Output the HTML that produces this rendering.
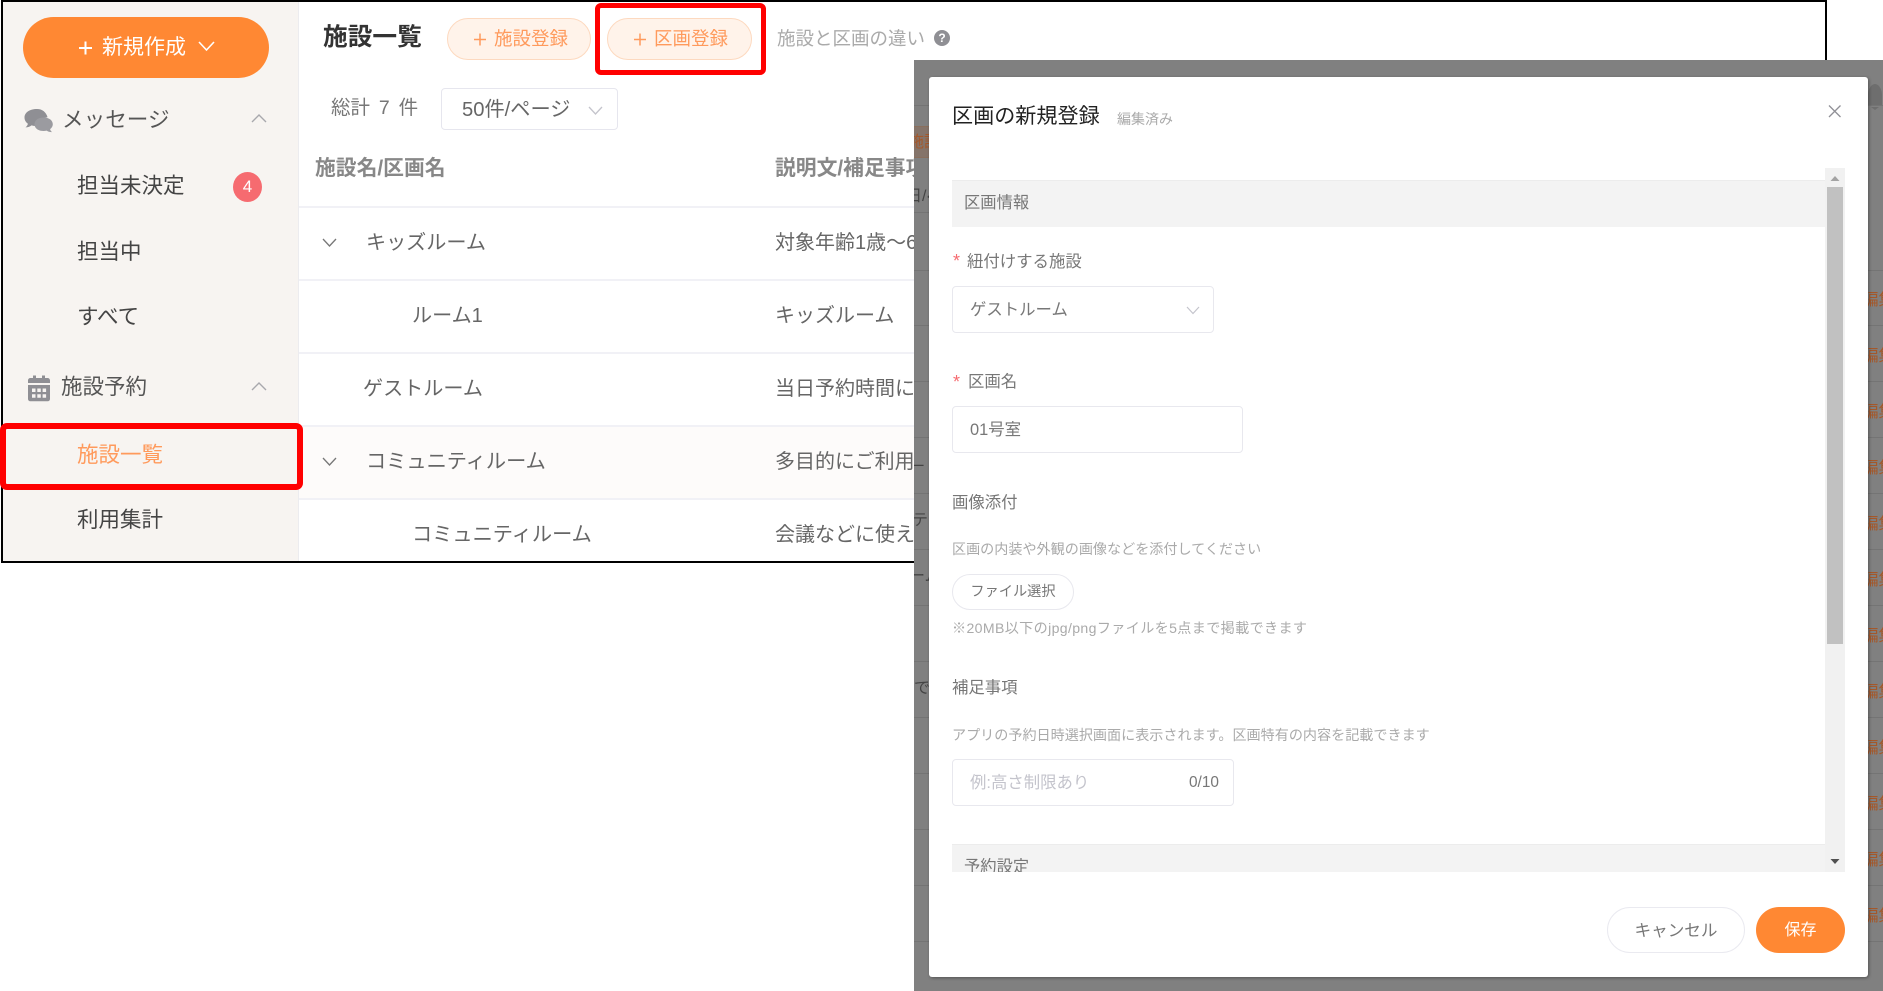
<!DOCTYPE html>
<html lang="ja"><head><meta charset="utf-8"><title>区画の新規登録</title>
<style>
html,body{margin:0;padding:0;background:#fff;width:1883px;height:991px;overflow:hidden}
body{position:relative;font-family:"Liberation Sans","Noto Sans CJK JP",sans-serif;color:#555}
.a{position:absolute;box-sizing:border-box}
.t{position:absolute;line-height:30px;height:30px;white-space:nowrap;margin-top:1px}
.c{text-align:center}
svg{position:absolute;overflow:visible}
.line{position:absolute;background:#f1f1f6;height:2px;left:299px;width:615px}
</style></head><body>

<!-- outer frame -->
<div class="a" style="left:1px;top:0;width:1826px;height:563px;border:2px solid #000"></div>

<!-- sidebar -->
<div class="a" style="left:3px;top:2px;width:296px;height:559px;background:#f7f4f1;border-right:1px solid #ececef"></div>
<div class="a" style="left:23px;top:17px;width:246px;height:61px;border-radius:31px;background:#ff8833"></div>
<svg style="left:0;top:0" width="300" height="560" fill="none">
<path d="M79 48H92M85.500 41.500V54.500" stroke="#fff" stroke-width="2"/>
<path d="M199 42l7.500 8 7.500-8" stroke="#fff" stroke-width="1.600"/>
<path d="M252 122l7-7 7 7M252 390l7-7 7 7" stroke="#a8a8ad" stroke-width="1.400"/>
<path d="M37 109c-7.500 0-12.500 3.600-12.500 8.500 0 2.600 1.300 4.700 3.400 6.200-.3 1.500-1.200 2.700-2.400 3.700 2.400 0 4.400-.8 6-2 1.700.5 3.500.7 5.500.6 0-4.800 4.300-8.300 10.600-8.800C46 112 42.300 109 37 109z" fill="#8f8f94"/>
<path d="M43.500 117.500c-5.300 0-9 2.900-9 6.800s3.700 6.700 9 6.700c1.100 0 2.200-.1 3.200-.4 1.200.9 2.900 1.500 5.300 1.500-1-.9-1.700-1.900-1.900-3 1.700-1.200 2.700-2.900 2.700-4.800 0-3.900-3.700-6.800-9.300-6.800z" fill="#9b9ba0"/>
<path d="M28 380.500c0-1.400 1-2.500 2.400-2.500H33v-2.500h3V378h6v-2.500h3V378h2.600c1.400 0 2.400 1.100 2.400 2.500V383H28z" fill="#8f8f94"/>
<path d="M28 385h22v14c0 1.300-1 2.300-2.300 2.300H30.300c-1.300 0-2.300-1-2.300-2.300z" fill="#8f8f94"/>
<path d="M32 388.500h3.500v3.500H32zM37.300 388.500h3.500v3.500h-3.500zM42.600 388.500h3.500v3.500h-3.500zM32 394.300h3.500v3.500H32zM37.300 394.300h3.500v3.500h-3.500zM42.600 394.300h3.500v3.500h-3.500z" fill="#f7f4f1"/>
</svg>
<div class="t" style="left:102px;top:32px;font-size:21px;color:#fff">新規作成</div>
<div class="t" style="left:62px;top:104px;font-size:21.600px;color:#555">メッセージ</div>
<div class="t" style="left:77px;top:170px;font-size:21.500px;color:#444">担当未決定</div>
<div class="a" style="left:233px;top:172px;width:29px;height:30px;border-radius:50%;background:#f66b70"></div>
<div class="t c" style="left:233px;top:171px;width:29px;font-size:17px;color:#fff">4</div>
<div class="t" style="left:77px;top:236px;font-size:21.500px;color:#444">担当中</div>
<div class="t" style="left:77px;top:301px;font-size:21.500px;color:#444">すべて</div>
<div class="t" style="left:61px;top:371px;font-size:21.500px;color:#555">施設予約</div>
<div class="t" style="left:77px;top:439px;font-size:21.500px;color:#ff9a5c">施設一覧</div>
<div class="t" style="left:77px;top:504px;font-size:21.500px;color:#444">利用集計</div>

<!-- main header -->
<div class="t" style="left:323px;top:22px;font-size:24.700px;font-weight:700;color:#333">施設一覧</div>
<div class="a" style="left:447px;top:18px;width:144px;height:42px;border-radius:21px;background:#fff3ea;border:1.500px solid #fdd9bf"></div>
<div class="a" style="left:607px;top:18px;width:145px;height:42px;border-radius:21px;background:#fff3ea;border:1.500px solid #fdd9bf"></div>
<svg style="left:0;top:0" width="800" height="100" fill="none"><path d="M474 39.500h12M480 33.500v12M634 39.500h12M640 33.500v12" stroke="#ff9a5c" stroke-width="1.500"/></svg>
<div class="t" style="left:494px;top:23px;font-size:18.500px;color:#ff9a5c">施設登録</div>
<div class="t" style="left:654px;top:23px;font-size:18.500px;color:#ff9a5c">区画登録</div>
<div class="t" style="left:777px;top:23px;font-size:18.500px;color:#aaa">施設と区画の違い</div>
<div class="a" style="left:934px;top:30px;width:16px;height:16px;border-radius:50%;background:#8f8f94"></div>
<div class="t c" style="left:934px;top:22px;width:16px;font-size:12px;font-weight:700;color:#fff">?</div>

<div class="t" style="left:331px;top:92px;font-size:19.500px;color:#777;word-spacing:3.500px">総計 7 件</div>
<div class="a" style="left:441px;top:88px;width:177px;height:42px;border:1.500px solid #e6e6ee;border-radius:4px"></div>
<div class="t" style="left:462px;top:94px;font-size:20.200px;color:#666">50件/ページ</div>
<svg style="left:0;top:0" width="700" height="150" fill="none"><path d="M589 107l6.500 7 6.500-7" stroke="#c4c4cc" stroke-width="1.300"/></svg>

<!-- table -->
<div class="t" style="left:315px;top:153px;font-size:20.800px;font-weight:700;color:#888">施設名/区画名</div>
<div class="a" style="left:775px;top:150px;width:139px;height:40px;overflow:hidden"><div class="t" style="left:0;top:3px;font-size:20.800px;font-weight:700;color:#888">説明文/補足事項</div></div>
<div class="line" style="top:206px"></div>
<div class="line" style="top:279px"></div>
<div class="line" style="top:352px"></div>
<div class="a" style="left:299px;top:426px;width:615px;height:72px;background:#fdfbfa"></div>
<div class="line" style="top:425px"></div>
<div class="line" style="top:498px"></div>
<svg style="left:0;top:0" width="400" height="500" fill="none"><path d="M323 239l6.500 7 6.500-7M323 458l6.500 7 6.500-7" stroke="#777" stroke-width="1.300"/></svg>
<div class="t" style="left:366px;top:227px;font-size:20.100px;color:#666">キッズルーム</div>
<div class="t" style="left:412px;top:300px;font-size:20.100px;color:#666">ルーム1</div>
<div class="t" style="left:363px;top:373px;font-size:20.100px;color:#666">ゲストルーム</div>
<div class="t" style="left:366px;top:446px;font-size:20.200px;color:#666">コミュニティルーム</div>
<div class="t" style="left:412px;top:519px;font-size:20.200px;color:#666">コミュニティルーム</div>
<div class="a" style="left:775px;top:220px;width:139px;height:330px;overflow:hidden">
<div class="t" style="left:0;top:7px;font-size:20px;color:#666">対象年齢1歳～6歳</div>
<div class="t" style="left:0;top:80px;font-size:20px;color:#666">キッズルーム</div>
<div class="t" style="left:0;top:153px;font-size:20px;color:#666">当日予約時間に</div>
<div class="t" style="left:0;top:226px;font-size:20px;color:#666">多目的にご利用</div>
<div class="t" style="left:0;top:299px;font-size:20px;color:#666">会議などに使え</div>
</div>

<!-- red highlights -->
<div class="a" style="left:0;top:423px;width:303px;height:67px;border:6px solid #f00;border-radius:7px"></div>
<div class="a" style="left:595px;top:3px;width:171px;height:72px;border:5px solid #f00;border-radius:6px"></div>

<!-- overlay -->
<div class="a" style="left:914px;top:60px;width:969px;height:931px;background:#808080;overflow:hidden">
  <svg style="left:0;top:0" width="969" height="931" fill="none" stroke="#747474" stroke-width="1">
  <path d="M0 45.500H969M0 152.500H15M0 210.500H969M0 265.500H969M0 321.500H969M0 377.500H969M0 433.500H969M0 489.500H969M0 545.500H969M0 601.500H969M0 657.500H969M0 713.500H969M0 769.500H969M0 825.500H969M0 881.500H969"/>
  <path d="M954 35c0-7 4-11 7-11s7 4 7 11v10h-14z" fill="#6e6e6e" stroke="none"/>
  <path d="M957 47h8l-4 3z" fill="#6e6e6e" stroke="none"/>
  </svg>
  <div class="a" style="left:0;top:66px;width:15px;height:32px;background:#85746a;border-top:1px solid #8a6f5d;border-bottom:1px solid #8a6f5d"></div>
  <div class="a" style="left:0;top:0;width:15px;height:931px;overflow:hidden">
    <div class="t" style="left:-6px;top:67px;font-size:16px;color:#a5582a">施設</div>
    <div class="t" style="left:-8px;top:121px;font-size:16px;color:#444">日/ペ</div>
    <div class="t" style="left:-3px;top:390px;font-size:14px;color:#444">ー</div>
    <div class="t" style="left:-2px;top:445px;font-size:16px;color:#444">ティ</div>
    <div class="t" style="left:-5px;top:501px;font-size:16px;color:#444">ーム</div>
    <div class="t" style="left:0;top:613px;font-size:16px;color:#444">で</div>
  </div>
  <div class="a" style="left:954px;top:0;width:15px;height:931px;overflow:hidden">
    <div class="t" style="left:-6px;top:224px;font-size:16.500px;color:#a5582a">編集</div>
    <div class="t" style="left:-6px;top:280px;font-size:16.500px;color:#a5582a">編集</div>
    <div class="t" style="left:-6px;top:336px;font-size:16.500px;color:#a5582a">編集</div>
    <div class="t" style="left:-6px;top:392px;font-size:16.500px;color:#a5582a">編集</div>
    <div class="t" style="left:-6px;top:448px;font-size:16.500px;color:#a5582a">編集</div>
    <div class="t" style="left:-6px;top:504px;font-size:16.500px;color:#a5582a">編集</div>
    <div class="t" style="left:-6px;top:560px;font-size:16.500px;color:#a5582a">編集</div>
    <div class="t" style="left:-6px;top:616px;font-size:16.500px;color:#a5582a">編集</div>
    <div class="t" style="left:-6px;top:672px;font-size:16.500px;color:#a5582a">編集</div>
    <div class="t" style="left:-6px;top:728px;font-size:16.500px;color:#a5582a">編集</div>
    <div class="t" style="left:-6px;top:784px;font-size:16.500px;color:#a5582a">編集</div>
    <div class="t" style="left:-6px;top:840px;font-size:16.500px;color:#a5582a">編集</div>
  </div>
</div>

<!-- modal -->
<div class="a" style="left:929px;top:77px;width:939px;height:900px;background:#fff;border-radius:3px;box-shadow:1px 1px 3px rgba(0,0,0,.35)"></div>
<div class="t" style="left:952px;top:101px;font-size:21.100px;color:#222">区画の新規登録</div>
<div class="t" style="left:1117px;top:103px;font-size:14px;color:#aaa">編集済み</div>
<svg style="left:0;top:0" width="1883" height="991" fill="none"><path d="M1829 105.500l11.500 11.500M1840.500 105.500l-11.500 11.500" stroke="#909096" stroke-width="1.300"/></svg>

<!-- scroll content -->
<div class="a" style="left:952px;top:168px;width:873px;height:704px;overflow:hidden;background:#fff">
  <div class="a" style="left:0;top:12px;width:873px;height:47px;background:#f3f3f3;border-top:1px solid #ececec"></div>
  <div class="t" style="left:12px;top:19px;font-size:16.300px;color:#777">区画情報</div>
  <div class="a" style="left:0;top:676px;width:873px;height:47px;background:#f3f3f3;border-top:1px solid #ececec"></div>
  <div class="t" style="left:12px;top:683px;font-size:16.300px;color:#777">予約設定</div>
</div>

<div class="t" style="left:953px;top:245px;font-size:18px;color:#f66b70">*</div>
<div class="t" style="left:967px;top:246px;font-size:16.400px;color:#777">紐付けする施設</div>
<div class="a" style="left:952px;top:286px;width:262px;height:47px;border:1.500px solid #e8e8ee;border-radius:4px"></div>
<div class="t" style="left:970px;top:294px;font-size:16.400px;color:#777">ゲストルーム</div>
<svg style="left:0;top:0" width="1300" height="400" fill="none"><path d="M1187 307l6 6.500 6-6.500" stroke="#c4c4cc" stroke-width="1.200"/></svg>

<div class="t" style="left:953px;top:366px;font-size:18px;color:#f66b70">*</div>
<div class="t" style="left:968px;top:366px;font-size:16.400px;color:#777">区画名</div>
<div class="a" style="left:952px;top:406px;width:291px;height:47px;border:1.500px solid #e8e8ee;border-radius:4px"></div>
<div class="t" style="left:970px;top:414px;font-size:16.400px;color:#777">01号室</div>

<div class="t" style="left:952px;top:487px;font-size:16.400px;color:#777">画像添付</div>
<div class="t" style="left:952px;top:533px;font-size:14.100px;color:#aaa">区画の内装や外観の画像などを添付してください</div>
<div class="a" style="left:952px;top:574px;width:122px;height:36px;border:1.500px solid #e8e8ee;border-radius:18px"></div>
<div class="t c" style="left:952px;top:576px;width:122px;font-size:14.200px;color:#777">ファイル選択</div>
<div class="t" style="left:952px;top:612px;font-size:14.100px;color:#aaa;letter-spacing:.36px">※20MB以下のjpg/pngファイルを5点まで掲載できます</div>

<div class="t" style="left:952px;top:672px;font-size:16.400px;color:#777">補足事項</div>
<div class="t" style="left:952px;top:719px;font-size:14.100px;color:#aaa">アプリの予約日時選択画面に表示されます。区画特有の内容を記載できます</div>
<div class="a" style="left:952px;top:759px;width:282px;height:47px;border:1.500px solid #e8e8ee;border-radius:4px"></div>
<div class="t" style="left:970px;top:767px;font-size:16.400px;color:#c4c4cc">例:高さ制限あり</div>
<div class="t" style="left:1189px;top:767px;font-size:15.400px;color:#777">0/10</div>

<!-- scrollbar -->
<div class="a" style="left:1825px;top:168px;width:20px;height:704px;background:#f1f1f1"></div>
<div class="a" style="left:1827px;top:187px;width:16px;height:457px;background:#c1c1c1"></div>
<svg style="left:0;top:0" width="1883" height="991"><path d="M1830.500 181h9l-4.500-5z" fill="#a3a3a3"/><path d="M1830.500 859h9l-4.500 5z" fill="#505050"/></svg>

<!-- footer -->
<div class="a" style="left:1607px;top:907px;width:138px;height:46px;border:1.500px solid #eaeaf0;border-radius:23px;background:#fff"></div>
<div class="t c" style="left:1607px;top:915px;width:138px;font-size:16.600px;color:#777">キャンセル</div>
<div class="a" style="left:1756px;top:907px;width:89px;height:46px;border-radius:23px;background:#ff8833"></div>
<div class="t c" style="left:1756px;top:915px;width:89px;font-size:16px;color:#fff">保存</div>

</body></html>
